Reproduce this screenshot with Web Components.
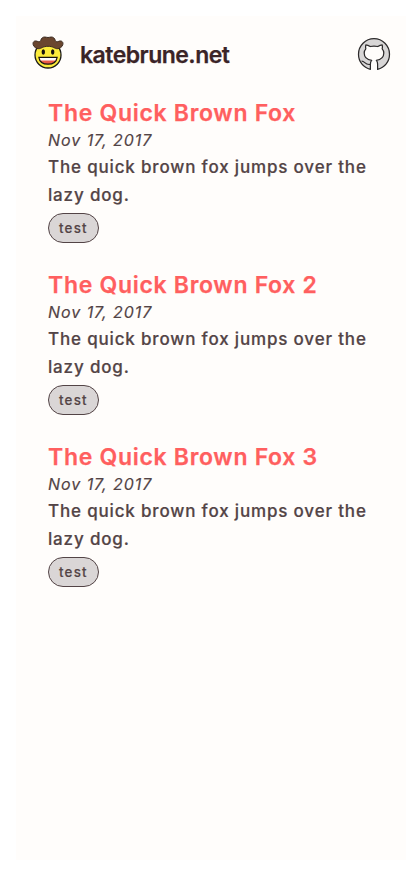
<!DOCTYPE html>
<html lang="en">
<head>
<meta charset="utf-8">
<title>katebrune.net</title>
<style>
html{background:#fff}
body{margin:0;padding:16px 0 16px 16px;height:876px;box-sizing:border-box;font-family:Inter,"Liberation Sans",sans-serif;color:#534446;overflow:hidden}
</style>
</head>
<body>
<blog-page>
  <site-header slot="header">katebrune.net</site-header>
  <post-item><span slot="title">The Quick Brown Fox</span><span slot="date">Nov 17, 2017</span>The quick brown fox jumps over the lazy dog.<post-tag slot="tags">test</post-tag></post-item>
  <post-item><span slot="title">The Quick Brown Fox 2</span><span slot="date">Nov 17, 2017</span>The quick brown fox jumps over the lazy dog.<post-tag slot="tags">test</post-tag></post-item>
  <post-item><span slot="title">The Quick Brown Fox 3</span><span slot="date">Nov 17, 2017</span>The quick brown fox jumps over the lazy dog.<post-tag slot="tags">test</post-tag></post-item>
</blog-page>
<script>
const define = (name, html) => customElements.define(name, class extends HTMLElement {
  constructor() {
    super();
    const t = document.createElement('template');
    t.innerHTML = html;
    this.attachShadow({mode: 'open'}).append(t.content.cloneNode(true));
  }
});

define('cowboy-icon', `<style>:host{display:block;width:32px;height:34px}svg{display:block}</style>
<svg width="32" height="34" viewBox="0 0 32 34">
  <circle cx="16" cy="19" r="13" fill="#fcec3c" stroke="#1b1a18" stroke-width="1.300"/>
  <path d="M1.200 8.700C.4 5.800 2.600 4.200 5.200 5.300c1.600.7 2.800.7 3.500-.8C9.300 2.300 10.700 1 12.700 1c1.300 0 1.900.5 3.300.5s2-.5 3.300-.5c2 0 3.400 1.300 4 3.500.7 1.500 1.900 1.500 3.500.8 2.600-1.100 4.800.5 4 3.400-.8 2.700-3.300 4-5.600 4-2.500 0-4-2.400-9.200-2.400s-6.700 2.400-9.200 2.400C4.500 12.700 2 11.400 1.200 8.700z" fill="#6a462f" stroke="#3b2a20" stroke-width="1"/>
  <ellipse cx="11.300" cy="16" rx="1.700" ry="2.700" fill="#171411"/><ellipse cx="20.700" cy="16" rx="1.700" ry="2.700" fill="#171411"/>
  <path d="M6.900 21.300h18.200c-.6 4.300-4.100 6.900-9.100 6.900s-8.500-2.600-9.100-6.900z" fill="#ea5a47" stroke="#171411" stroke-width="1.200"/>
  <path d="M7.700 21.900h16.600l-1 2.600H8.700z" fill="#fff"/>
</svg>`);

define('github-icon', `<style>:host{display:block;width:34px;height:34px}svg{display:block}</style>
<svg width="34" height="34" viewBox="0 0 34 34">
  <path d="M13.400 32.300C6.300 30.700 1.500 24.500 1.500 17.200a15.500 15.500 0 0 1 31 0c0 7.300-4.800 13.500-11.900 15.100V26.900c0-1.500-.4-2.600-1.300-3.500C23.700 22.800 26.800 21 26.800 16c0-1.700-.6-3.100-1.600-4.200.5-1.300.3-2.600 0-4-1.600 0-3 .7-4.400 1.700a15 15 0 0 0-7.600 0C11.800 8.500 10.400 7.800 8.800 7.800c-.3 1.400-.5 2.700 0 4-1 1.100-1.600 2.500-1.600 4.200 0 5 3.100 6.800 7.500 7.400-.9.900-1.300 2-1.300 3.500z" fill="#d8d6d6" stroke="#2c2a2b" stroke-width="1.250" stroke-linejoin="round"/>
  <path d="M4.600 24.100c3.400-.2 3.300 4.200 8.600 3.300" fill="none" stroke="#2c2a2b" stroke-width="1.200"/>
</svg>`);

define('site-header', `<style>
:host{display:flex;align-items:center;height:76px;padding:0 15px 0 16px;color:#3a2427}
h1{margin:2px auto 0 16px;font-size:23px;line-height:32px;font-weight:600;letter-spacing:-.52px;-webkit-text-stroke:.25px}
cowboy-icon{margin-top:-3px}
</style><cowboy-icon></cowboy-icon><h1><slot></slot></h1><github-icon></github-icon>`);

define('post-tag', `<style>
:host{display:flex;align-items:center;height:28px;padding:0 10px;border:1px solid #534446;border-radius:15px;background:#dad6d6;font-size:13.333px;font-weight:500;letter-spacing:1.200px;-webkit-text-stroke:.15px}
</style><slot></slot>`);

define('post-item', `<style>
:host{display:block;height:172px}
h2{margin:0;font-size:23px;line-height:32px;font-weight:600;letter-spacing:.7px;-webkit-text-stroke:.25px;color:#ff5f5f}
.date{margin:-1px 0 1px;font-size:16px;line-height:24px;font-style:italic;-webkit-text-stroke:.15px;letter-spacing:.95px}
p{margin:0 -4px 0 0;font-size:17px;line-height:28px;font-weight:500;letter-spacing:.830px;-webkit-text-stroke:.2px}
.tags{display:flex;margin-top:4px}
</style><h2><slot name="title"></slot></h2><div class="date"><slot name="date"></slot></div><p><slot></slot></p><div class="tags"><slot name="tags"></slot></div>`);

define('blog-page', `<style>
:host{display:block;height:844px;background:#fffdfb}
main{padding:5px 32px 0}
</style><slot name="header"></slot><main><slot></slot></main>`);
</script>
</body>
</html>
